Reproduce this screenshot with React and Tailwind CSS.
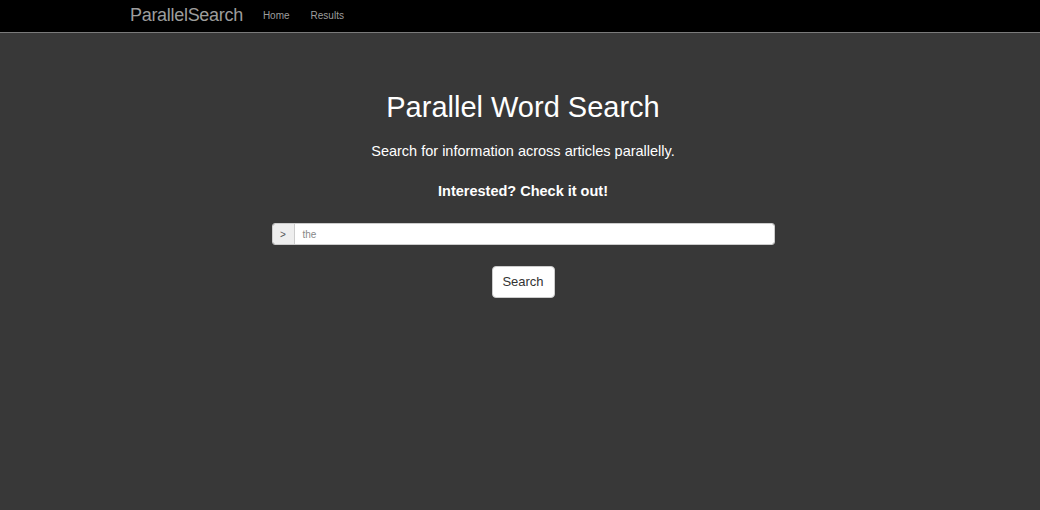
export default function App() {
  return (
    <div className="min-h-[510px] bg-[#383838] font-['Liberation_Sans',Arial,sans-serif]">
      <nav className="h-[33px] bg-black border-b border-[#7a7a7a]">
        <div className="flex items-center h-full pl-[130px] pb-[2px]">
          <span className="text-[18px] text-[#9d9d9d] tracking-[-0.3px]">ParallelSearch</span>
          <span className="ml-[20px] text-[10px] text-[#9d9d9d]">Home</span>
          <span className="ml-[21px] text-[10px] text-[#9d9d9d]">Results</span>
        </div>
      </nav>
      <main className="flex flex-col items-center text-white pl-[6px]">
        <h1 className="mt-[57px] text-[29px] leading-[34px]">Parallel Word Search</h1>
        <p className="mt-[19px] text-[14.5px] leading-[16px]">Search for information across articles parallelly.</p>
        <p className="mt-[24px] text-[14.5px] leading-[16px] font-bold">Interested? Check it out!</p>
        <div className="mt-[24px] flex w-[503px] h-[22px] rounded-[3px] overflow-hidden border border-[#ccc]">
          <div className="w-[22px] bg-[#eee] text-[#555] text-[10px] flex items-center justify-center border-r border-[#ccc]">&gt;</div>
          <div className="flex-1 bg-white text-[#888] text-[10px] flex items-center pl-[8px]">the</div>
        </div>
        <button className="mt-[21px] w-[63px] h-[32px] rounded-[4px] bg-white border border-[#ccc] text-[#333] text-[13px]">Search</button>
      </main>
    </div>
  );
}
